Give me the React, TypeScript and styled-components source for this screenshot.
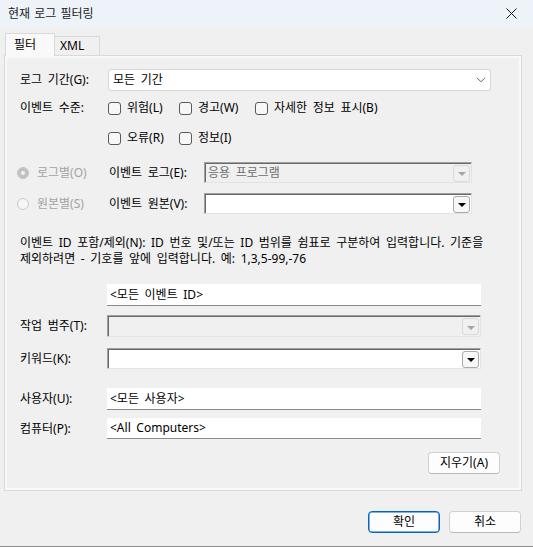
import styled, { createGlobalStyle } from 'styled-components'

const GlobalStyle = createGlobalStyle`
	html, body {
		margin: 0;
		padding: 0;
		background: #f0f0f0;
	}
	body {
		font-family: 'Noto Sans', 'Noto Sans CJK KR', sans-serif;
		font-size: 12px;
		line-height: 16px;
		word-spacing: 2.5px;
		color: #000;
	}
`

const Window = styled.div`
	width: 533px;
	height: 547px;
	box-sizing: border-box;
	background: #f0f0f0;
	border-bottom: 1px solid #8c8c8c;
	display: flex;
	flex-direction: column;
`

const TitleBar = styled.div`
	height: 27px;
	flex: none;
	background: #eef3fa;
	display: flex;
	align-items: center;
	justify-content: space-between;
	padding: 0 16px 0 8px;
`

const Title = styled.span`
	color: #1a1a1a;
	word-spacing: 1px;
`

const Body = styled.div`
	display: flex;
	flex-direction: column;
	padding: 6px 0 0 4px;
`

const TabStrip = styled.div`
	display: flex;
	align-items: flex-start;
	height: 22px;
	padding-left: 1px;
`

const Tab = styled.div<{ $active?: boolean }>`
	box-sizing: border-box;
	position: relative;
	z-index: ${(p) => (p.$active ? 2 : 1)};
	height: ${(p) => (p.$active ? '23px' : '19px')};
	margin-top: ${(p) => (p.$active ? '0' : '3px')};
	width: ${(p) => (p.$active ? '50px' : '45px')};
	padding-left: ${(p) => (p.$active ? '8px' : '5px')};
	background: ${(p) => (p.$active ? '#f9f9f9' : '#f0f0f0')};
	border: 1px solid #d9d9d9;
	border-bottom: none;
	border-left: ${(p) => (p.$active ? '1px solid #d9d9d9' : 'none')};
	display: flex;
	align-items: center;
`

const Panel = styled.div`
	box-sizing: border-box;
	width: 518px;
	height: 436px;
	border: 1px solid #d9d9d9;
	background: #f9f9f9;
	padding: 2px;
	display: flex;
`

const Page = styled.div`
	flex: 1;
	background: #f0f0f0;
	display: flex;
	flex-direction: column;
	padding-left: 10px;
`

const Row = styled.div<{ $mt: number }>`
	display: flex;
	align-items: center;
	margin-top: ${(p) => p.$mt}px;
`

const Label = styled.div`
	box-sizing: border-box;
	width: 90px;
	flex: none;
	padding-left: 3px;
	white-space: nowrap;
`

const ModernSelect = styled.div`
	box-sizing: border-box;
	width: 383px;
	height: 22px;
	margin-left: 1px;
	background: #fff;
	border: 1px solid #d6d6d6;
	border-radius: 3px;
	display: flex;
	align-items: center;
	justify-content: space-between;
	padding: 0 4px 0 4px;
`

const TextInput = styled.div<{ $h?: number }>`
	box-sizing: border-box;
	width: 374px;
	height: ${(p) => p.$h ?? 22}px;
	background: #fff;
	border-bottom: 1px solid #8a8a8a;
	display: flex;
	align-items: center;
	padding-left: 3px;
`

const CheckGrid = styled.div`
	margin-left: 1px;
	display: grid;
	grid-template-columns: 71px 76px auto;
	align-items: center;
	height: 22px;
`

const CheckItem = styled.label`
	display: flex;
	align-items: center;
	gap: 6px;
	white-space: nowrap;
`

const CheckBox = styled.span`
	box-sizing: border-box;
	width: 13px;
	height: 13px;
	border: 1px solid #5a5a5a;
	border-radius: 3px;
	background: #f7f7f7;
`

const RadioCell = styled.div`
	width: 92px;
	flex: none;
	display: flex;
	align-items: center;
	gap: 8px;
	color: #a3a3a3;
	white-space: nowrap;
`

const Radio = styled.span<{ $checked?: boolean }>`
	box-sizing: border-box;
	width: 12px;
	height: 12px;
	border-radius: 50%;
	display: flex;
	align-items: center;
	justify-content: center;
	background: ${(p) => (p.$checked ? '#c2c2c2' : '#f6f6f6')};
	border: 1px solid ${(p) => (p.$checked ? '#c2c2c2' : '#cbcbcb')};

	&::after {
		content: '';
		display: ${(p) => (p.$checked ? 'block' : 'none')};
		width: 4px;
		height: 4px;
		border-radius: 50%;
		background: #f0f0f0;
	}
`

const SubLabel = styled.div`
	width: 95px;
	flex: none;
	white-space: nowrap;
`

const ClassicCombo = styled.div<{ $w: number; $h: number; $disabled?: boolean }>`
	box-sizing: border-box;
	width: ${(p) => p.$w}px;
	height: ${(p) => p.$h}px;
	background: ${(p) => (p.$disabled ? '#f0f0f0' : '#fff')};
	border: 1px solid;
	border-color: #a0a0a0 #e3e3e3 #e3e3e3 #a0a0a0;
	box-shadow: inset 1px 1px 0 #696969;
	display: flex;
	align-items: center;
	justify-content: space-between;
	padding: 1px 1px 0 3px;
	color: #6d6d6d;
	white-space: nowrap;
`

const ComboButton = styled.span<{ $disabled?: boolean }>`
	box-sizing: border-box;
	width: 17px;
	height: 17px;
	flex: none;
	border: 1px solid ${(p) => (p.$disabled ? '#dadada' : '#a9a9a9')};
	border-radius: 3px;
	background: ${(p) => (p.$disabled ? '#f0f0f0' : '#f7f7f7')};
	display: flex;
	align-items: center;
	justify-content: center;

	&::after {
		content: '';
		width: 0;
		height: 0;
		margin-top: 2px;
		border-left: 4px solid transparent;
		border-right: 4px solid transparent;
		border-top: 4px solid ${(p) => (p.$disabled ? '#a6a6a6' : '#000')};
	}
`

const Description = styled.div<{ $mt: number }>`
	margin-top: ${(p) => p.$mt}px;
	padding-left: 3px;
	white-space: nowrap;
`

const Button = styled.button<{ $primary?: boolean }>`
	box-sizing: border-box;
	width: 72px;
	height: 22px;
	font: inherit;
	word-spacing: inherit;
	color: #000;
	background: #fdfdfd;
	border: 1px solid ${(p) => (p.$primary ? '#0067c0' : '#d0d0d0')};
	border-bottom-color: ${(p) => (p.$primary ? '#0067c0' : '#b8b8b8')};
	box-shadow: ${(p) => (p.$primary ? 'inset 0 0 0 0.5px #0067c0' : 'none')};
	border-radius: 4px;
	padding: 0;
	display: flex;
	align-items: center;
	justify-content: center;
`

const ClearRow = styled.div`
	display: flex;
	justify-content: flex-end;
	margin-top: 13px;
	padding-right: 19px;
`

const Footer = styled.div`
	display: flex;
	justify-content: flex-end;
	gap: 9px;
	margin-top: 20px;
	padding-right: 12px;
`

const checksTop = ['위험(L)', '경고(W)', '자세한 정보 표시(B)']
const checksBottom = ['오류(R)', '정보(I)']

export default function App() {
	return (
		<>
			<GlobalStyle />
			<Window>
				<TitleBar>
					<Title>현재 로그 필터링</Title>
					<svg width="11" height="11" viewBox="0 0 11 11">
						<path d="M0.5 0.5 L10.5 10.5 M10.5 0.5 L0.5 10.5" stroke="#1a1a1a" strokeWidth="1" />
					</svg>
				</TitleBar>
				<Body>
					<TabStrip>
						<Tab $active>필터</Tab>
						<Tab>XML</Tab>
					</TabStrip>
					<Panel>
						<Page>
							<Row $mt={11}>
								<Label>로그 기간(G):</Label>
								<ModernSelect>
									<span>모든 기간</span>
									<svg width="10" height="6" viewBox="0 0 10 6">
										<path d="M1 0.8 L5 4.8 L9 0.8" fill="none" stroke="#5f5f5f" strokeWidth="1" />
									</svg>
								</ModernSelect>
							</Row>
							<Row $mt={6}>
								<Label>이벤트 수준:</Label>
								<CheckGrid>
									{checksTop.map((c) => (
										<CheckItem key={c}>
											<CheckBox />
											{c}
										</CheckItem>
									))}
								</CheckGrid>
							</Row>
							<Row $mt={8}>
								<Label />
								<CheckGrid>
									{checksBottom.map((c) => (
										<CheckItem key={c}>
											<CheckBox />
											{c}
										</CheckItem>
									))}
								</CheckGrid>
							</Row>
							<Row $mt={13}>
								<RadioCell>
									<Radio $checked />
									로그별(O)
								</RadioCell>
								<SubLabel>이벤트 로그(E):</SubLabel>
								<ClassicCombo $w={268} $h={21} $disabled>
									<span>응용 프로그램</span>
									<ComboButton $disabled />
								</ClassicCombo>
							</Row>
							<Row $mt={10}>
								<RadioCell>
									<Radio />
									원본별(S)
								</RadioCell>
								<SubLabel>이벤트 원본(V):</SubLabel>
								<ClassicCombo $w={268} $h={21}>
									<span />
									<ComboButton />
								</ClassicCombo>
							</Row>
							<Description $mt={21}>
								이벤트 ID 포함/제외(N): ID 번호 및/또는 ID 범위를 쉼표로 구분하여 입력합니다. 기준을
								<br />
								제외하려면 - 기호를 앞에 입력합니다. 예: 1,3,5-99,-76
							</Description>
							<Row $mt={17}>
								<Label />
								<TextInput>&lt;모든 이벤트 ID&gt;</TextInput>
							</Row>
							<Row $mt={9}>
								<Label>작업 범주(T):</Label>
								<ClassicCombo $w={374} $h={22} $disabled>
									<span />
									<ComboButton $disabled />
								</ClassicCombo>
							</Row>
							<Row $mt={11}>
								<Label>키워드(K):</Label>
								<ClassicCombo $w={374} $h={21}>
									<span />
									<ComboButton />
								</ClassicCombo>
							</Row>
							<Row $mt={19}>
								<Label>사용자(U):</Label>
								<TextInput>&lt;모든 사용자&gt;</TextInput>
							</Row>
							<Row $mt={8}>
								<Label>컴퓨터(P):</Label>
								<TextInput $h={21}>&lt;All Computers&gt;</TextInput>
							</Row>
							<ClearRow>
								<Button>지우기(A)</Button>
							</ClearRow>
						</Page>
					</Panel>
					<Footer>
						<Button $primary>확인</Button>
						<Button>취소</Button>
					</Footer>
				</Body>
			</Window>
		</>
	)
}
